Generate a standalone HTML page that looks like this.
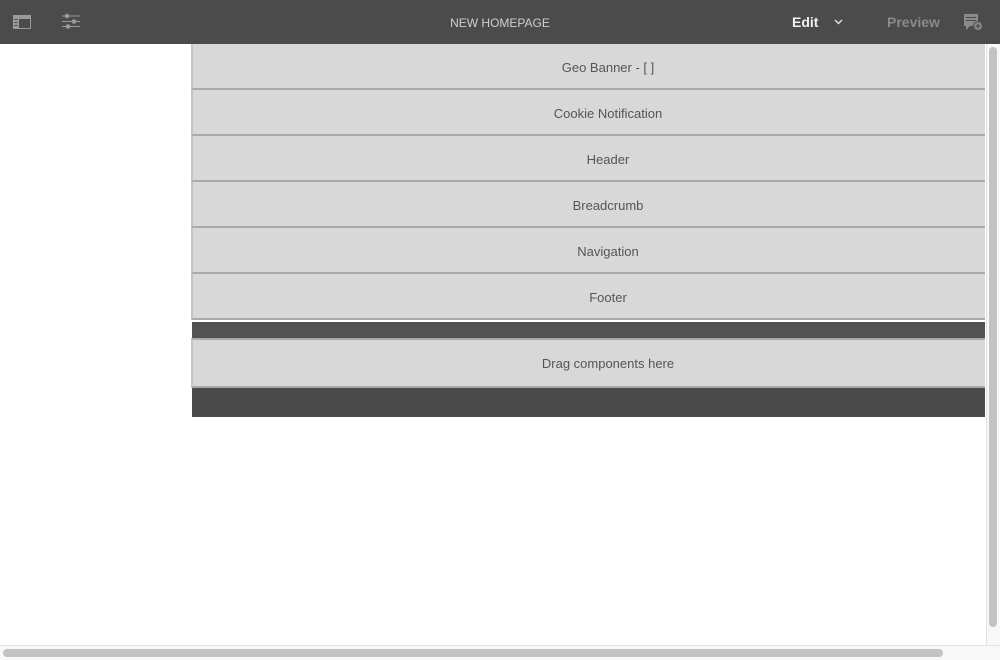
<!DOCTYPE html>
<html><head><style>
*{margin:0;padding:0;box-sizing:border-box}
body{width:1000px;height:660px;overflow:hidden;background:#fff;font-family:"Liberation Sans",sans-serif;position:relative}
.top{position:absolute;left:0;top:0;width:1000px;height:44px;background:#4b4b4b;color:#d8d8d8}
.title{position:absolute;left:0;width:1000px;top:16px;text-align:center;font-size:12px;color:#cfcfcf}
.edit{position:absolute;left:792px;top:14px;font-size:14px;font-weight:bold;color:#f0f0f0}
.prev{position:absolute;left:887px;top:14px;font-size:14px;font-weight:bold;color:#8a8a8a}
.box{position:absolute;left:191px;width:794px;height:46px;background:#d8d8d8;border-left:2px solid #c6c6c6;border-bottom:2px solid #a9a9a9;text-align:center;font-size:13px;color:#555;line-height:47px;padding-left:38px}
.dark{position:absolute;left:192px;width:793px;background:#505050}
</style></head><body>
<div class="top">
<svg style="position:absolute;left:13px;top:15px" width="18" height="14"><rect x="0" y="0" width="18" height="14" fill="#9a9a9a"/><rect x="6" y="4" width="11" height="9" fill="#4b4b4b"/><rect x="1.5" y="4" width="3" height="1" fill="#4b4b4b"/><rect x="1.5" y="7" width="3" height="1" fill="#4b4b4b"/><rect x="1.5" y="10" width="3" height="1" fill="#4b4b4b"/></svg>
<svg style="position:absolute;left:61px;top:13px" width="20" height="17" fill="#9a9a9a" stroke="#9a9a9a"><line x1="1" y1="3" x2="19" y2="3"/><line x1="1" y1="8.5" x2="19" y2="8.5"/><line x1="1" y1="13.5" x2="19" y2="13.5"/><circle cx="6" cy="3" r="2.3" stroke="none"/><circle cx="13" cy="8.5" r="2.3" stroke="none"/><circle cx="7" cy="13.5" r="2.3" stroke="none"/></svg>
<div class="title">NEW HOMEPAGE</div>
<div class="edit">Edit</div>
<svg style="position:absolute;left:834px;top:19px" width="9" height="6"><path d="M1 1L4.5 4.5L8 1" stroke="#ddd" stroke-width="1.5" fill="none"/></svg>
<div class="prev">Preview</div>
<svg style="position:absolute;left:963px;top:13px" width="20" height="18"><rect x="1" y="1" width="14" height="12" fill="#8a8a8a"/><path d="M3 13L3 17L7 13Z" fill="#8a8a8a"/><rect x="3" y="4" width="10" height="1" fill="#4b4b4b"/><rect x="3" y="7" width="10" height="1" fill="#4b4b4b"/><circle cx="15" cy="13" r="4.5" fill="#8a8a8a" stroke="#4b4b4b"/><path d="M15 10.5v5M12.5 13h5" stroke="#4b4b4b" stroke-width="1.3"/></svg>
</div>
<div class="box" style="top:44px">Geo Banner - [ ]</div>
<div class="box" style="top:90px">Cookie Notification</div>
<div class="box" style="top:136px">Header</div>
<div class="box" style="top:182px">Breadcrumb</div>
<div class="box" style="top:228px">Navigation</div>
<div class="box" style="top:274px">Footer</div>
<div class="dark" style="top:322px;height:16px;background:#525252"></div>
<div class="box" style="top:338px;height:50px;border-top:2px solid #a9a9a9;line-height:47px">Drag components here</div>
<div class="dark" style="top:388px;height:29px;background:#4a4a4a"></div>
<div style="position:absolute;left:986px;top:44px;width:14px;height:616px;background:#f8f8f8;border-left:1px solid #e2e2e2"></div>
<div style="position:absolute;left:989px;top:47px;width:8px;height:580px;background:#c3c3c3;border-radius:4px"></div>
<div style="position:absolute;left:0;top:645px;width:1000px;height:15px;background:#f8f8f8;border-top:1px solid #e2e2e2"></div>
<div style="position:absolute;left:3px;top:649px;width:940px;height:8px;background:#c3c3c3;border-radius:4px"></div>
</body></html>
